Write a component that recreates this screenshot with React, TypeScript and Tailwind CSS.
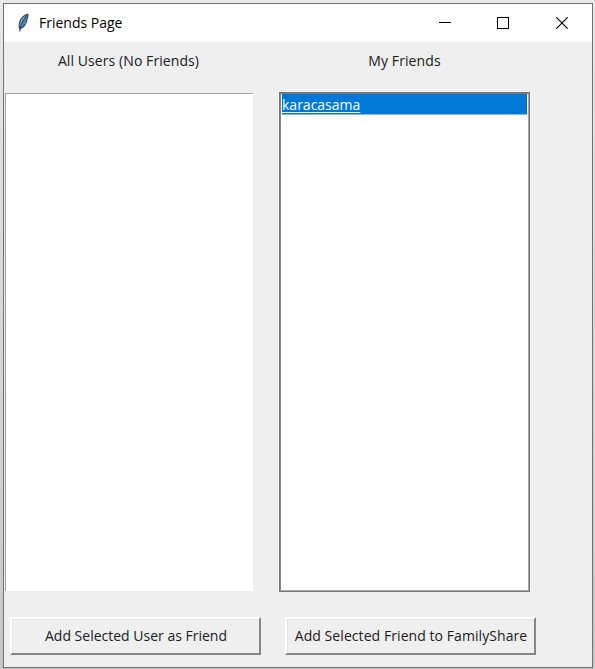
import React from "react";

function Feather() {
  return (
    <svg width="16" height="22" viewBox="0 0 16 22" className="block">
      <path d="M13.300 1.400C9 2 4.900 6.200 4 10.400c-.5 2.500-.5 4.300 0 6l.6 3.300.8-.1.3-2.600c3-.9 5.200-3.600 6.200-7.200.7-2.900 2.100-5.800 1.400-8.400z" fill="#3b4148" />
      <path d="M12 2.600C8.900 4 6 7.400 5.200 11l-.3 3.500c1.500-4.400 3.700-8.300 7.100-11.900z" fill="#86b4e4" />
      <path d="M12.300 3.200C9.200 7 7 11 5.900 15.700c2.400-1.100 4.200-3.800 5-6.600.6-2 1.300-3.800 1.400-5.900z" fill="#4a88cf" />
      <path d="M12.300 2.500C8.600 6.500 6.200 11.500 5.200 17" fill="none" stroke="#2f5f96" strokeWidth=".6" />
      <path d="M5.200 6.500l.9 1M3.900 12.500l1.200.6M11.200 11.600l-1.500-.7" stroke="#9a9fa5" strokeWidth=".8" />
    </svg>
  );
}

function TitleBar() {
  return (
    <header className="flex h-[38px] shrink-0 items-center bg-white text-black">
      <div className="ml-[11px] w-4">
        <Feather />
      </div>
      <h1 className="ml-2 grow text-[14px] leading-5">Friends Page</h1>
      <div className="flex h-full" aria-label="Window controls">
        <button className="flex w-[58px] items-center justify-center" aria-label="Minimize">
          <svg width="12" height="12" shapeRendering="crispEdges"><path d="M0 5.500H12" stroke="#000" /></svg>
        </button>
        <button className="flex w-[58px] items-center justify-center" aria-label="Maximize">
          <svg width="12" height="12" shapeRendering="crispEdges"><rect x=".5" y=".5" width="11" height="11" fill="none" stroke="#000" /></svg>
        </button>
        <button className="flex w-[60px] items-center justify-center" aria-label="Close">
          <svg width="12" height="12"><path d="M.3.3l11.400 11.400M11.700.3L.3 11.700" stroke="#000" strokeWidth="1.100" /></svg>
        </button>
      </div>
    </header>
  );
}

function ActionButton({ children }: { children: React.ReactNode }) {
  return (
    <button className="h-[38px] w-[251px] border-2 border-t-white border-l-white border-r-[#858585] border-b-[#858585] bg-[#efefef]">
      <span className="flex h-full items-center justify-center border-t border-l border-[#e3e3e3] pb-[3px] whitespace-nowrap">
        {children}
      </span>
    </button>
  );
}

export default function App() {
  return (
    <div className="h-[669px] w-[595px] bg-[#d6d6d6] bg-linear-to-b from-[#e8e8e8] to-[#c6c6c6] pt-[3px] pl-[3px] font-['Open_Sans','Noto_Sans',sans-serif] text-[14px]">
      <div className="flex h-[665px] w-[590px] flex-col border border-[#707070] bg-[#efefef]">
        <TitleBar />
        <main className="flex flex-col text-[#202020]">
          <div className="flex h-[50px] pt-[9px] leading-5">
            <h2 className="w-[249px] text-center whitespace-nowrap tracking-[0.08px]">All Users (No Friends)</h2>
            <h2 className="ml-[26px] w-[251px] text-center whitespace-nowrap tracking-[0.1px]">My Friends</h2>
          </div>
          <div className="flex">
            <div className="mt-px ml-px h-[498px] w-[248px] border-t border-l border-[#a0a0a0] bg-white" />
            <div className="ml-[26px] h-[500px] w-[251px] border border-[#787878]">
              <div className="h-full border border-t-[#787878] border-r-[#a0a0a0] border-b-[#a8a8a8] border-l-[#858585] bg-white">
                <div className="mr-px ml-px h-[21px] border-b border-[#7fbcf0] bg-[#0078d7] pt-px leading-[20px] text-white">
                  <span className="block w-[78px] whitespace-nowrap underline decoration-1 underline-offset-2">karacasama</span>
                </div>
              </div>
            </div>
          </div>
          <div className="mt-[25px] ml-1.5 flex gap-6">
            <ActionButton><span>Add Selected User as Friend</span></ActionButton>
            <ActionButton><span className="tracking-[0.07px]">Add Selected Friend to FamilyShare</span></ActionButton>
          </div>
        </main>
      </div>
    </div>
  );
}
